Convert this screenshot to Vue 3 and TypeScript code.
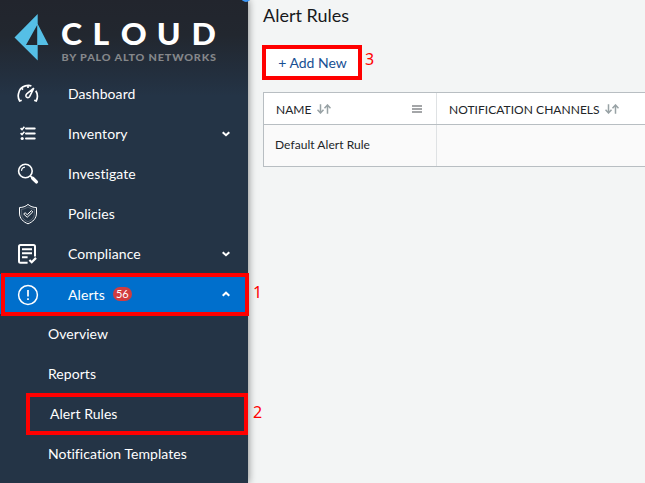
<script setup lang="ts">
interface NavItem {
  label: string
  icon: string
  chevron?: 'up' | 'down'
  badge?: number
  active?: boolean
}

const items: NavItem[] = [
  { label: 'Dashboard', icon: 'gauge' },
  { label: 'Inventory', icon: 'list', chevron: 'down' },
  { label: 'Investigate', icon: 'search' },
  { label: 'Policies', icon: 'shield' },
  { label: 'Compliance', icon: 'document', chevron: 'down' },
  { label: 'Alerts', icon: 'alert', chevron: 'up', badge: 56, active: true },
]

const subItems: string[] = ['Overview', 'Reports', 'Alert Rules', 'Notification Templates']
</script>

<template>
  <div class="screen">
    <aside class="sidebar">
      <header class="brand">
        <svg class="logo" width="248" height="74" viewBox="0 0 248 74">
          <path d="M37.7 14 14.5 37.5 37.7 60.5V45H26L37.2 25V45H48.5L37.7 24Z" fill="#55bfe6" />
          <text class="logo-name" transform="translate(61 44.8) scale(1.05 1)" x="0 30 57 91.3 124.3">CLOUD</text>
          <text class="logo-by" transform="translate(61.5 60.8) scale(1.14 1)" textLength="135.5" lengthAdjust="spacing">BY PALO ALTO NETWORKS</text>
        </svg>
      </header>

      <nav>
        <a v-for="item in items" :key="item.label" class="item" :class="{ active: item.active }">
          <svg class="icon" width="22" height="22" viewBox="0 0 22 22" fill="none" stroke="#fff">
            <g v-if="item.icon === 'gauge'" stroke-width="1.7">
              <path d="M4.7 17.2 2.7 18C1.2 15.7.9 13.2 1.5 10.6 2.1 7 4.8 4 8.3 2.9 10.3 2.3 12.7 2.3 14.4 3M18.8 7.8C20.9 11.2 20.8 14.8 19.2 18L17.2 17.2M11 2.5V5M4.6 5.2 6 6.7" />
              <path d="M16.8 5.1 12.6 13.6C11.8 15 9.8 14.9 9.1 13.6 8.6 12.5 8.9 11.6 9.7 10.9Z" stroke-width="1.6" />
            </g>
            <g v-else-if="item.icon === 'list'">
              <path d="M9 5.6H17.7M9 10.6H17.7M9 15.5H17.7" stroke-width="2" stroke-linecap="round" />
              <path d="M3.6 5.2 5 6.5 7.4 3.8M3.6 10.2 5 11.5 7.4 8.8" stroke-width="1.6" />
              <circle cx="5.2" cy="15.5" r="1.6" fill="#fff" stroke="none" />
            </g>
            <g v-else-if="item.icon === 'search'">
              <circle cx="8.4" cy="8" r="6.8" stroke-width="1.6" />
              <path d="M4.5 7.9C4.6 5.8 6.1 4.3 8 4.1" stroke-width="1.1" />
              <path d="m13.3 12.9 2 2" stroke-width="1.6" />
              <path d="m15.7 15.3 3.7 3.6" stroke-width="3.4" stroke-linecap="round" />
            </g>
            <g v-else-if="item.icon === 'shield'" stroke-width="1">
              <path d="M11 1.4C8.6 3.6 5.7 4.5 2.5 4.5V10C2.5 15.5 6.3 19 11 20.8 15.7 19 19.5 15.5 19.5 10V4.5C16.3 4.5 13.4 3.6 11 1.4Z" />
              <path d="M11 3.9C9 5.3 6.8 6.2 4.6 6.3V10.3C4.6 14.5 7.3 17.1 11 18.7 14.7 17.1 17.4 14.5 17.4 10.3V6.3C15.2 6.2 13 5.3 11 3.9Z" stroke-width=".6" stroke-opacity=".4" />
              <path d="m6.7 11 1.4-1.3L10.2 11.7 14.5 7.6 15.8 8.9 10.2 14.3Z" />
            </g>
            <g v-else-if="item.icon === 'document'">
              <path d="M10.6 19.8H3.5Q2 19.8 2 18.3V3.5Q2 2 3.5 2H16.5Q18 2 18 3.5V13.5" stroke-width="2" />
              <path d="M5 6.3H15M5 10.3H15M5 14.3H10.6" stroke-width="2" />
              <path d="m12.4 17 2.3 2.2 4.3-4.3" stroke-width="2.2" />
            </g>
            <g v-else>
              <circle cx="11" cy="11" r="9.4" stroke-width="1.5" />
              <path d="M11 6V12.4M11 14.2V16.1" stroke-width="1.7" />
            </g>
          </svg>
          <span class="label">{{ item.label }}</span>
          <span v-if="item.badge" class="badge">{{ item.badge }}</span>
          <svg v-if="item.chevron" class="chevron" width="8" height="6" viewBox="0 0 8 6" fill="none" stroke="#fff" stroke-width="2">
            <path :d="item.chevron === 'down' ? 'M.7 1.2 4 4.2 7.3 1.2' : 'M.7 4.7 4 1.7 7.3 4.7'" />
          </svg>
        </a>
        <a v-for="sub in subItems" :key="sub" class="sub" :class="{ selected: sub === 'Alert Rules' }">{{ sub }}</a>
      </nav>
    </aside>

    <main class="content">
      <h1>Alert Rules</h1>
      <button class="add">+ Add New</button>
      <div class="table">
        <div class="row head">
          <div class="cell name">
            <span class="title">NAME</span>
            <svg class="sort" width="14" height="10" viewBox="0 0 14 10"><path d="M3.5.3V9M.5 5.8 3.5 9 6.5 5.8M10.5 9.7V1M7.5 4.2 10.5 1l3 3.2" /></svg>
            <svg class="menu" width="10" height="8" viewBox="0 0 10 8"><path d="M0 1H10M0 4H10M0 7H10" /></svg>
          </div>
          <div class="cell">
            <span class="title">NOTIFICATION CHANNELS</span>
            <svg class="sort" width="14" height="10" viewBox="0 0 14 10"><path d="M3.5.3V9M.5 5.8 3.5 9 6.5 5.8M10.5 9.7V1M7.5 4.2 10.5 1l3 3.2" /></svg>
          </div>
        </div>
        <div class="row body">
          <div class="cell name">Default Alert Rule</div>
          <div class="cell"></div>
        </div>
      </div>
    </main>

    <span class="handle"></span>
    <span class="mark mark-alerts"></span><span class="num num-1">1</span>
    <span class="mark mark-rules"></span><span class="num num-2">2</span>
    <span class="mark mark-add"></span><span class="num num-3">3</span>
  </div>
</template>

<style>
body { margin: 0; overflow: hidden; }
</style>

<style scoped>
.screen {
  position: relative;
  display: flex;
  width: 645px;
  height: 483px;
  overflow: hidden;
  background: #f3f5f5;
  font-family: Lato, sans-serif;
}
.sidebar {
  flex: none;
  width: 248px;
  background: linear-gradient(#22252d 0, #22272f 35px, #233040 80px, #243446 96px);
  box-shadow: 0 0 8px rgba(0, 0, 0, 0.5);
  color: #fff;
}
.brand { height: 74px; }
.logo { display: block; }
.logo-name { font: 900 30.5px Lato, sans-serif; fill: #fff; }
.logo-by { font: 900 9.5px Lato, sans-serif; fill: #85878a; }
.item {
  display: flex;
  align-items: center;
  box-sizing: border-box;
  height: 40px;
  padding: 0 18px 0 17px;
  font-size: 14px;
  line-height: 20px;
  letter-spacing: 0.09px;
}
.item.active { background: #006fcc; }
.active .label, .active .icon { margin-top: 2px; }
.icon { flex: none; margin-right: 29px; }
.badge {
  margin-left: 8px;
  width: 19px;
  height: 14px;
  border-radius: 7px;
  background: #d13c3f;
  font-size: 11px;
  font-weight: 400;
  line-height: 13px;
  text-align: center;
}
.chevron { margin-left: auto; }
.sub {
  display: block;
  height: 40px;
  padding-left: 48px;
  font-size: 14px;
  line-height: 40px;
  letter-spacing: 0.05px;
}
.selected { padding-left: 50px; }
.content {
  flex: 1;
  min-width: 0;
  padding: 4px 0 0 15px;
}
h1 {
  margin: 0;
  color: #17191c;
  font-size: 18px;
  font-weight: 400;
  line-height: 22px;
}
.add {
  display: block;
  width: 98px;
  height: 33px;
  margin: 20px 0 0;
  padding: 0 0 0 1px;
  border: 0;
  background: #fff;
  color: #174f93;
  font: 14px/33px Lato, sans-serif;
}
.table {
  width: 400px;
  margin-top: 13px;
  border: 1px solid #b8bec2;
  box-sizing: border-box;
  color: #222529;
}
.row { display: flex; }
.cell {
  display: flex;
  align-items: center;
  flex: 1;
  padding-left: 12px;
}
.cell.name {
  flex: none;
  box-sizing: border-box;
  width: 173px;
  border-right: 1px solid #dfe2e4;
}
.head { height: 31px; background: #fff; border-bottom: 1px solid #b8bec2; font-size: 12px; }
.title { padding-top: 2px; letter-spacing: 0.04px; }
.body { height: 41px; background: #fafafa; font-size: 12px; }
.body .name { padding-left: 11px; padding-bottom: 2px; letter-spacing: 0.05px; }
.sort { margin-left: 5px; fill: none; stroke: #98a2a5; stroke-width: 1.5; }
.menu { margin: 1px 14px 0 auto; stroke: #a4a6a8; stroke-width: 2; }
.handle {
  position: absolute;
  top: -8px;
  left: 241px;
  width: 10px;
  height: 10px;
  border-radius: 5px;
  background: #3d96f4;
}
.mark {
  position: absolute;
  box-sizing: border-box;
  border: 4px solid #f00;
}
.mark-alerts { left: 1px; top: 273px; width: 248px; height: 43px; }
.mark-rules { left: 26px; top: 393px; width: 222px; height: 42px; }
.mark-add { left: 262px; top: 45px; width: 100px; height: 35px; }
.num {
  position: absolute;
  color: #f00;
  font: 16px/20px "Noto Sans", sans-serif;
}
.num-1 { left: 253px; top: 282px; }
.num-2 { left: 253px; top: 402px; }
.num-3 { left: 365px; top: 49px; }
</style>
